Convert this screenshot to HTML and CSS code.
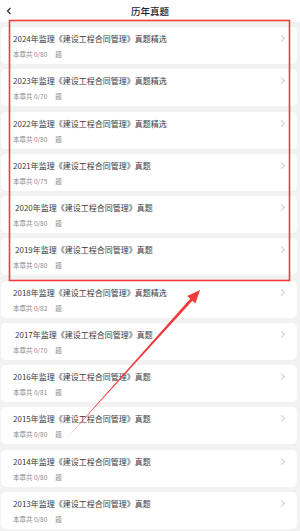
FILE: index.html
```html
<!DOCTYPE html>
<html lang="zh-CN">
<head>
    <meta charset="UTF-8">
    <meta name="viewport" content="width=device-width, initial-scale=1.0">
    <title>历年真题</title>
    <link rel="stylesheet" href="styles.css">
</head>
<body>
    <div class="header">
        <span class="back">
            <svg width="6" height="8" viewBox="0 0 6 8"><polyline points="4.5,1 1.5,4 4.5,7" fill="none" stroke="#333" stroke-width="1.3"/></svg>
        </span>
        <h1>历年真题</h1>
    </div>
    <div class="list">
        <div class="card"><div class="title">2024年监理《建设工程合同管理》真题精选</div><div class="sub">本章共 0/80<span class="unit">题</span></div><span class="arrow"></span></div>
        <div class="card"><div class="title">2023年监理《建设工程合同管理》真题精选</div><div class="sub">本章共 0/70<span class="unit">题</span></div><span class="arrow"></span></div>
        <div class="card"><div class="title">2022年监理《建设工程合同管理》真题精选</div><div class="sub">本章共 0/80<span class="unit">题</span></div><span class="arrow"></span></div>
        <div class="card"><div class="title">2021年监理《建设工程合同管理》真题</div><div class="sub">本章共 0/75<span class="unit">题</span></div><span class="arrow"></span></div>
        <div class="card"><div class="title indent">2020年监理《建设工程合同管理》真题</div><div class="sub">本章共 0/80<span class="unit">题</span></div><span class="arrow"></span></div>
        <div class="card"><div class="title indent">2019年监理《建设工程合同管理》真题</div><div class="sub">本章共 0/80<span class="unit">题</span></div><span class="arrow"></span></div>
        <div class="card"><div class="title">2018年监理《建设工程合同管理》真题精选</div><div class="sub">本章共 0/82<span class="unit">题</span></div><span class="arrow"></span></div>
        <div class="card"><div class="title indent">2017年监理《建设工程合同管理》真题</div><div class="sub">本章共 0/70<span class="unit">题</span></div><span class="arrow"></span></div>
        <div class="card"><div class="title">2016年监理《建设工程合同管理》真题</div><div class="sub">本章共 0/81<span class="unit">题</span></div><span class="arrow"></span></div>
        <div class="card"><div class="title">2015年监理《建设工程合同管理》真题</div><div class="sub">本章共 0/80<span class="unit">题</span></div><span class="arrow"></span></div>
        <div class="card"><div class="title">2014年监理《建设工程合同管理》真题</div><div class="sub">本章共 0/80<span class="unit">题</span></div><span class="arrow"></span></div>
        <div class="card"><div class="title">2013年监理《建设工程合同管理》真题</div><div class="sub">本章共 0/80<span class="unit">题</span></div><span class="arrow"></span></div>
    </div>
    <svg class="markup" width="300" height="531" viewBox="0 0 300 531">
        <rect x="9.5" y="20.5" width="280" height="260" fill="none" stroke="#f23a3a" stroke-width="1.6"/>
        <polygon points="65,440 190.2,298.7 187.2,296 200,290 195.4,303.4 192.4,300.7" fill="#f23a3a"/>
    </svg>
</body>
</html>
```

FILE: styles.css
```css
body {
    margin: 0;
    background: #f2f2f2;
    font-family: "Noto Sans CJK SC", "Noto Sans", sans-serif;
    color: #333;
    position: relative;
    height: 531px;
    overflow: hidden;
}
.header {
    height: 22px;
    background: #fff;
    display: flex;
    align-items: center;
    justify-content: center;
    position: relative;
}
.header h1 { margin: 0; font-size: 9.5px; font-weight: 500; color: #222; line-height: 12px; }
.back { position: absolute; left: 6px; top: 7px; display: flex; }
.list { padding: 5px 3px 0 1px; }
.card {
    position: relative;
    height: 37px;
    margin-bottom: 5.27px;
    background: #fff;
    border-radius: 5px;
    padding: 6px 0 0 12px;
    box-sizing: border-box;
}
.title { font-size: 8px; line-height: 11px; color: #3a3a3a; }
.title.indent { padding-left: 2px; }
.sub { margin-top: 6px; font-size: 6.5px; line-height: 8px; color: #888; }
.unit { margin-left: 8px; }
.arrow {
    position: absolute;
    right: 13px;
    top: 9px;
    width: 4px;
    height: 4px;
    border-top: 0.8px solid #d0d0d0;
    border-right: 0.8px solid #d0d0d0;
    transform: rotate(45deg);
}
.markup { position: absolute; left: 0; top: 0; pointer-events: none; }
```
